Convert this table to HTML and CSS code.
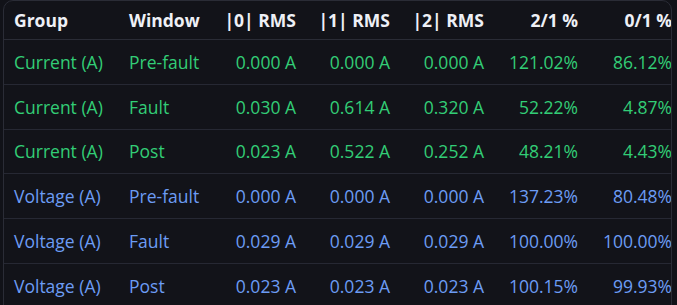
FILE: index.html
```html
<!DOCTYPE html>
<html>
<head>
<meta charset="utf-8">
<link rel="stylesheet" href="styles.css">
</head>
<body>
<div class="wrap">
  <table class="grid">
    <colgroup>
      <col class="c-group"><col class="c-window"><col class="c-num"><col class="c-num"><col class="c-num"><col class="c-num"><col class="c-num">
    </colgroup>
    <thead>
      <tr><th>Group</th><th>Window</th><th class="num">|0| RMS</th><th class="num">|1| RMS</th><th class="num">|2| RMS</th><th class="num">2/1 %</th><th class="num">0/1 %</th></tr>
    </thead>
    <tbody>
      <tr class="cur"><td>Current (A)</td><td>Pre-fault</td><td class="num">0.000 A</td><td class="num">0.000 A</td><td class="num">0.000 A</td><td class="num">121.02%</td><td class="num">86.12%</td></tr>
      <tr class="cur"><td>Current (A)</td><td>Fault</td><td class="num">0.030 A</td><td class="num">0.614 A</td><td class="num">0.320 A</td><td class="num">52.22%</td><td class="num">4.87%</td></tr>
      <tr class="cur"><td>Current (A)</td><td>Post</td><td class="num">0.023 A</td><td class="num">0.522 A</td><td class="num">0.252 A</td><td class="num">48.21%</td><td class="num">4.43%</td></tr>
      <tr class="vol"><td>Voltage (A)</td><td>Pre-fault</td><td class="num">0.000 A</td><td class="num">0.000 A</td><td class="num">0.000 A</td><td class="num">137.23%</td><td class="num">80.48%</td></tr>
      <tr class="vol"><td>Voltage (A)</td><td>Fault</td><td class="num">0.029 A</td><td class="num">0.029 A</td><td class="num">0.029 A</td><td class="num">100.00%</td><td class="num">100.00%</td></tr>
      <tr class="vol"><td>Voltage (A)</td><td>Post</td><td class="num">0.023 A</td><td class="num">0.023 A</td><td class="num">0.023 A</td><td class="num">100.15%</td><td class="num">99.93%</td></tr>
    </tbody>
  </table>
</div>
</body>
</html>
```
FILE: styles.css
```css
html, body {
  margin: 0;
  padding: 0;
  background: #111218;
  height: 100%;
  overflow: hidden;
}
body {
  font-family: "Segoe UI", "Open Sans", "Noto Sans", sans-serif;
  font-size: 17.5px;
}
.wrap {
  margin-left: 3px;
  width: 667px;
  height: 400px;
  border: 1px solid #2a2c36;
  border-radius: 10px;
  overflow: hidden;
  background: #121319;
}
.grid {
  border-collapse: collapse;
  table-layout: fixed;
  width: 678px;
}
.c-group { width: 115px; }
.c-window { width: 93px; }
.c-num { width: 94px; }
th, td {
  padding: 0 10px;
  text-align: left;
  white-space: nowrap;
}
th {
  height: 38px;
  color: #eef0f6;
  font-weight: 700;
  font-size: 17.5px;
  border-bottom: 1px solid #2a2c36;
}
td {
  height: 43.8px;
  border-bottom: 1px solid #262833;
}
.num { text-align: right; }
.cur td { color: #32cd76; }
.vol td { color: #6c9cf4; }
```
